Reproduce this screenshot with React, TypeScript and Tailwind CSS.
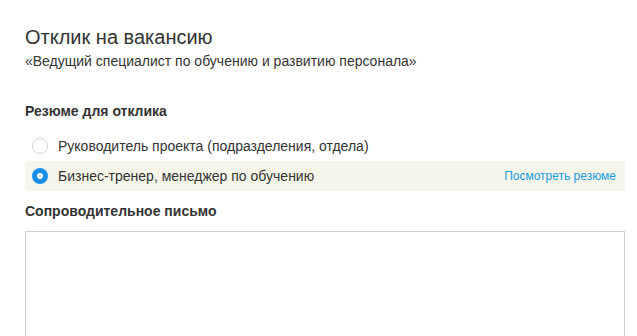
import React from 'react';

const Radio: React.FC<{ checked: boolean }> = ({ checked }) =>
  checked ? (
    <span className="w-4 h-4 rounded-full bg-[#1a8fe8] flex items-center justify-center shrink-0">
      <span className="w-[6px] h-[6px] rounded-full bg-white" />
    </span>
  ) : (
    <span className="w-4 h-4 rounded-full border border-[#d2d2d2] bg-white shrink-0" />
  );

export default function App() {
  const resumes = [
    { label: 'Руководитель проекта (подразделения, отдела)', checked: false },
    { label: 'Бизнес-тренер, менеджер по обучению', checked: true },
  ];

  return (
    <div className="w-[637px] h-[336px] overflow-hidden bg-white font-['Liberation_Sans',Arial,sans-serif] text-[#333]">
      <div className="w-[600px] ml-[25px] pt-[25px]">
        {/* Header */}
        <h1 className="text-[20px] leading-[24px] font-normal text-[#333]">Отклик на вакансию</h1>
        <p className="mt-[3px] text-[14px] leading-[18px] text-[#333]">
          «Ведущий специалист по обучению и развитию персонала»
        </p>

        {/* Resume */}
        <h2 className="mt-[32px] text-[14px] leading-[18px] font-bold text-[#333]">Резюме для отклика</h2>
        <div className="mt-[11px]">
          {resumes.map(r => (
            <div
              key={r.label}
              className={`h-[30px] flex items-center pl-[7px] pr-[9px] ${r.checked ? 'bg-[#f5f6e9]' : ''}`}
            >
              <Radio checked={r.checked} />
              <span className="ml-[10px] text-[14px] text-[#333] flex-1">{r.label}</span>
              {r.checked && (
                <a className="text-[12px] text-[#1a9be6] cursor-pointer">Посмотреть резюме</a>
              )}
            </div>
          ))}
        </div>

        {/* Cover letter */}
        <h2 className="mt-[11px] text-[14px] leading-[18px] font-bold text-[#333]">Сопроводительное письмо</h2>
        <textarea className="mt-[11px] block w-full h-[140px] border border-[#cfcfcf] bg-white resize-none outline-none" />
      </div>
    </div>
  );
}
